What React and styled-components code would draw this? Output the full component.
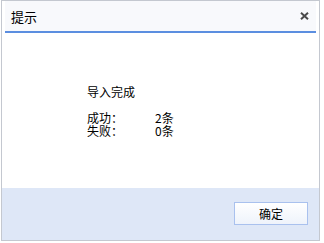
import React from "react";
import styled, { createGlobalStyle } from "styled-components";

const GlobalStyle = createGlobalStyle`
  html, body {
    margin: 0;
    padding: 0;
    background: #ffffff;
  }
  body {
    font-family: "Noto Sans CJK SC", "Liberation Sans", sans-serif;
    font-size: 12px;
    color: #000;
  }
`;

const Page = styled.div`
  width: 324px;
  height: 243px;
  padding: 0 0 0 1px;
  box-sizing: border-box;
`;

const Dialog = styled.div`
  width: 319px;
  height: 241px;
  box-sizing: border-box;
  border: 1px solid #c4c8d0;
  background: #fff;
  display: flex;
  flex-direction: column;
`;

const TitleBar = styled.div`
  height: 30px;
  margin: 0 3px 0 3px;
  padding: 0 6px 0 6px;
  display: flex;
  align-items: center;
  justify-content: space-between;
  background: #f8f9fc;
  border-bottom: 2px solid #5b8ee0;
`;

const Title = styled.span`
  font-size: 13px;
  line-height: 1;
  color: #000;
`;

const CloseButton = styled.button`
  border: none;
  background: none;
  padding: 0;
  margin-right: 1px;
  width: 10px;
  height: 10px;
  display: flex;
  align-items: center;
  justify-content: center;
  cursor: pointer;
`;

const Body = styled.div`
  flex: 1;
  padding: 52px 0 0 85px;
`;

const Heading = styled.div`
  font-size: 12px;
  line-height: 14px;
  margin-bottom: 12px;
`;

const ResultRow = styled.div`
  display: flex;
  font-size: 12px;
  line-height: 13px;
  height: 12px;
  overflow: visible;
  margin-bottom: 1px;
`;

const Label = styled.span`
  width: 68px;
`;

const Value = styled.span``;

const Footer = styled.div`
  height: 52px;
  background: #dee7f7;
  display: flex;
  align-items: center;
  justify-content: flex-end;
  padding: 0 11px 2px 0;
  box-sizing: border-box;
`;

const OkButton = styled.button`
  width: 74px;
  height: 23px;
  box-sizing: border-box;
  border: 1px solid #a9c1ee;
  background: linear-gradient(#ffffff, #eef3fb);
  font-family: "Noto Sans CJK SC", "Liberation Sans", sans-serif;
  font-size: 12px;
  color: #000;
  padding: 0;
  cursor: pointer;
`;

export default function App() {
  return (
    <>
      <GlobalStyle />
      <Page>
        <Dialog>
          <TitleBar>
            <Title>提示</Title>
            <CloseButton aria-label="close">
              <svg width="9" height="8" viewBox="0 0 9 8">
                <path
                  d="M1 0.8 L8 7.2 M8 0.8 L1 7.2"
                  stroke="#4a4a4a"
                  strokeWidth="2"
                />
              </svg>
            </CloseButton>
          </TitleBar>
          <Body>
            <Heading>导入完成</Heading>
            <ResultRow>
              <Label>成功：</Label>
              <Value>2条</Value>
            </ResultRow>
            <ResultRow>
              <Label>失败：</Label>
              <Value>0条</Value>
            </ResultRow>
          </Body>
          <Footer>
            <OkButton>确定</OkButton>
          </Footer>
        </Dialog>
      </Page>
    </>
  );
}
